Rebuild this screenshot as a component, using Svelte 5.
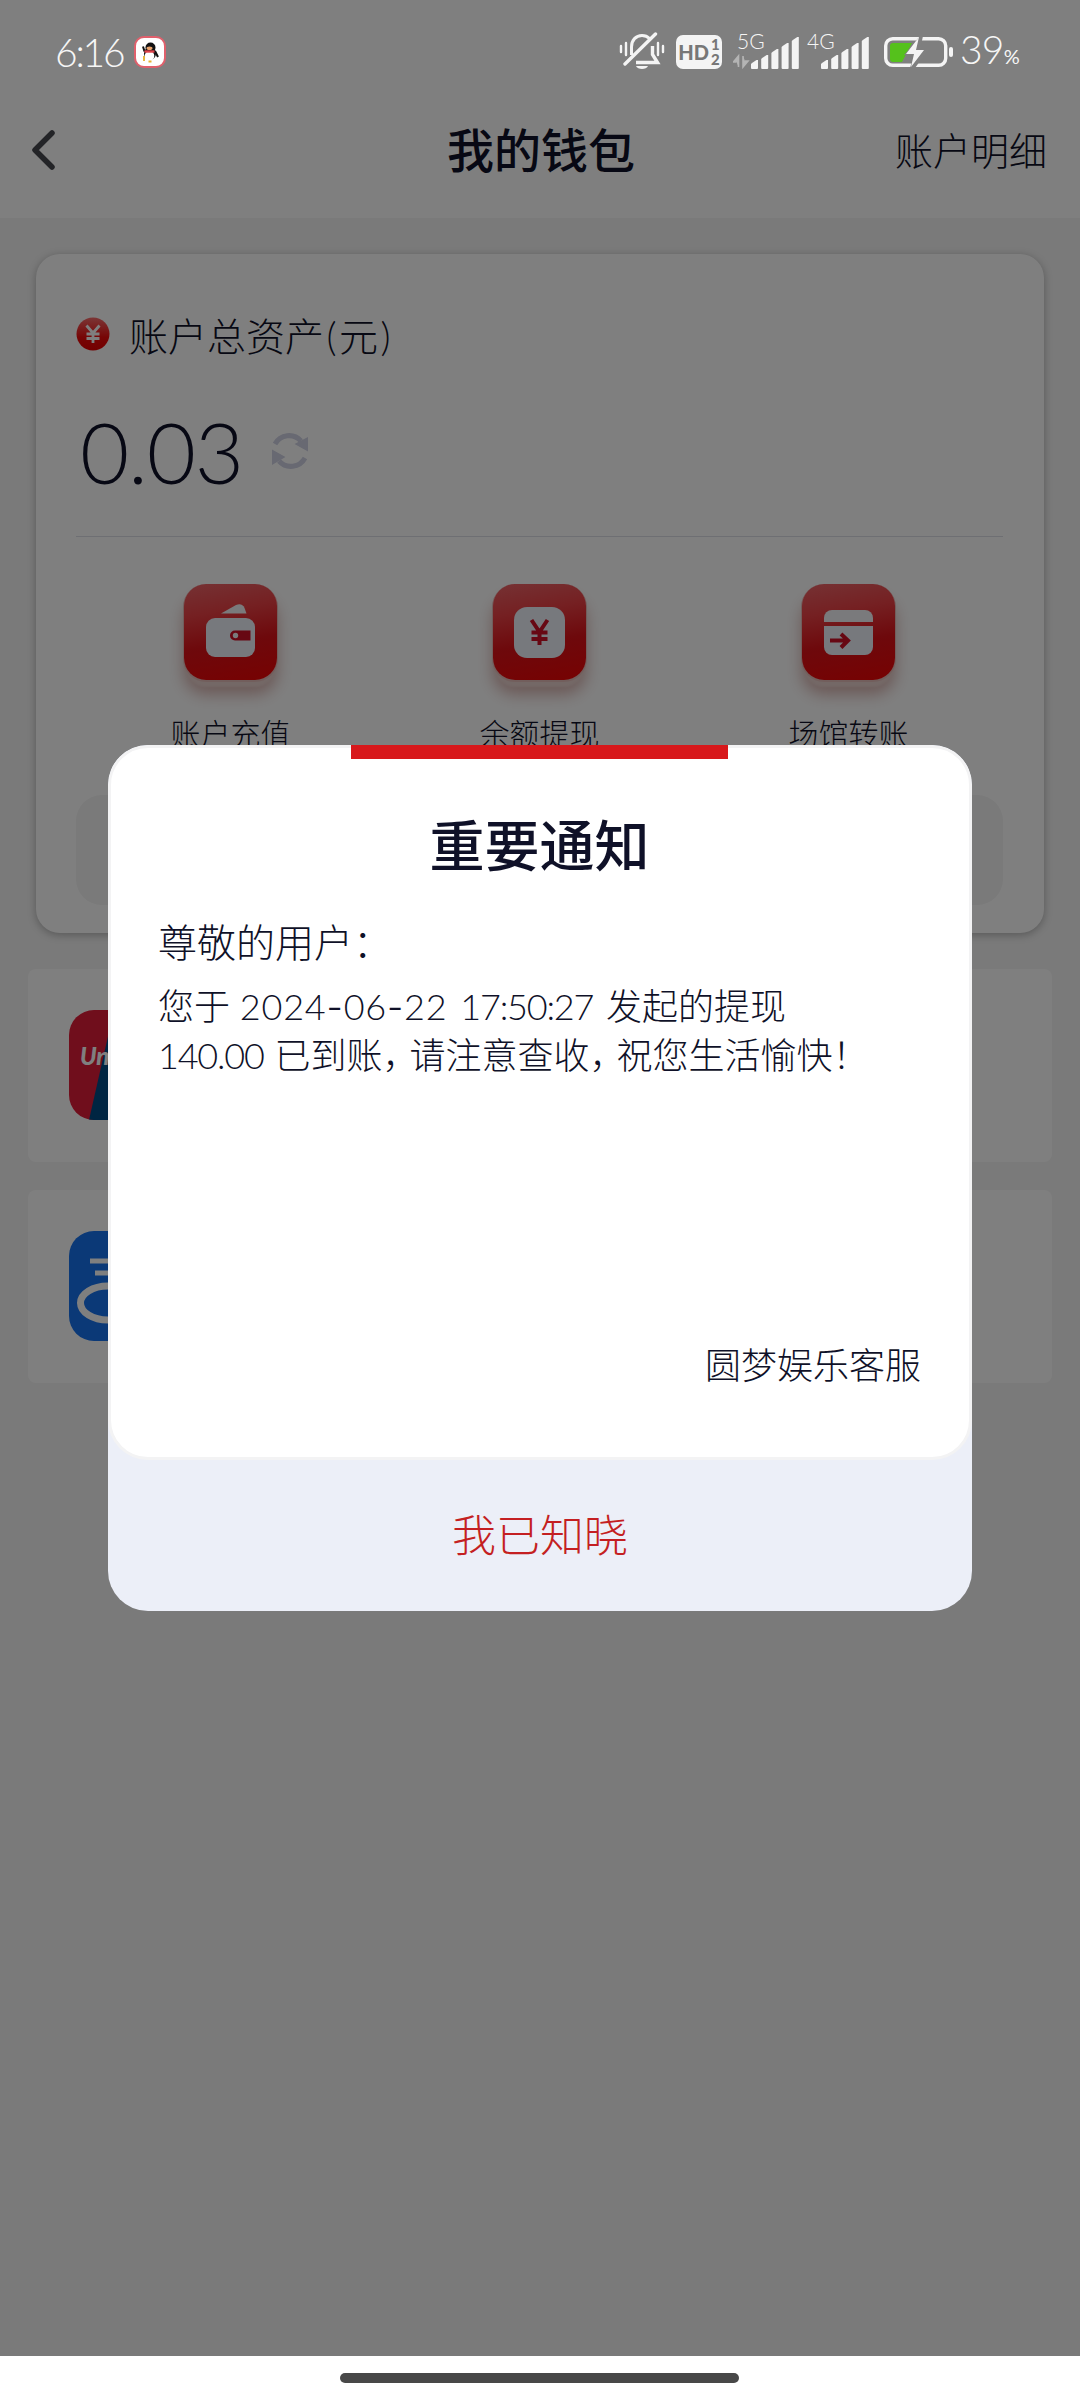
<script lang="ts">
  interface Action {
    id: string;
    label: string;
  }

  const actions: Action[] = [
    { id: 'deposit', label: '账户充值' },
    { id: 'withdraw', label: '余额提现' },
    { id: 'transfer', label: '场馆转账' }
  ];

  const networks = ['5G', '4G'];

  let noticeOpen = $state(true);
</script>

<div class="screen">
  <div class="status-bar">
    <span class="time">6:16</span>
    <svg class="qq" width="32" height="32" viewBox="0 0 32 32">
      <rect x="1" y="1" width="30" height="30" rx="9" fill="#fff" stroke="#e0606c" stroke-width="2" />
      <ellipse cx="16" cy="17.500" rx="6" ry="6.500" fill="#111" />
      <circle cx="16.500" cy="11.500" r="5" fill="#111" />
      <path d="M9 10.500l1.500 5M21 15l3 6" stroke="#111" stroke-width="2" />
      <ellipse cx="15.500" cy="20" rx="4.800" ry="4.800" fill="#fff" />
      <ellipse cx="15.500" cy="12.300" rx="3" ry="1.800" fill="#e9a36b" />
      <path d="M10.500 15.500h10" stroke="#e0434b" stroke-width="2.400" />
      <path d="M10 20v5M14.500 25.500h3" stroke="#e5b12e" stroke-width="1.800" />
    </svg>

    <div class="status-icons">
      <svg class="bell" width="46" height="40" viewBox="0 0 46 40" fill="none" stroke="#f4f4f4">
        <path d="M12.500 23V15C12.500 8 17 3.500 23 3.500c3 0 5.500 1 7.500 3" stroke-width="3" />
        <path d="M33.500 14v8.500l5 8H17" stroke-width="3.400" />
        <path d="M6 32L36.500 2" stroke-width="3.400" stroke-linecap="round" />
        <path d="M17 34h12c-1.500 4-10.500 4-12 0z" fill="#f4f4f4" stroke="none" />
        <path d="M2 14v6M7 11v12M39 11v12M44 14v6" stroke-width="2.400" stroke-linecap="round" />
      </svg>
      <div class="hd">
        <span>HD</span>
        <span class="hd-num"><b>1</b><b>2</b></span>
      </div>
      {#each networks as net, i}
        <div class="signal">
          <span class="net">{net}</span>
          <svg width="68" height="34" viewBox="0 0 68 34">
            {#if i === 0}
              <path d="M5.500 32V21l-5 6h3v0M10 21v11l5-6h-3" fill="#b4b4b4" stroke="#b4b4b4" stroke-width="1.600" />
            {/if}
            {#each [8, 13, 19, 25, 31] as h, n}
              <path
                d="M{19 + n * 10.200} {33 - h + 3}l4.500-3h1.500v{h}a1 1 0 0 1-1 1h-5a1 1 0 0 1-1-1v-{h - 4}z"
                fill="#f4f4f4"
              />
            {/each}
          </svg>
        </div>
      {/each}
      <svg class="battery" width="70" height="32" viewBox="0 0 70 32">
        <rect x="1.700" y="2.700" width="60" height="26.600" rx="7" fill="none" stroke="#f4f4f4" stroke-width="3.400" />
        <path d="M9 7h19L18 26H9a3 3 0 0 1-3-3V10a3 3 0 0 1 3-3z" fill="#55c11c" />
        <path d="M36 0L20 19h10l-4 13h5l13-18h-8l3-14z" fill="#808080" />
        <path d="M35 1L22 18h8l-3 13 13-17h-8z" fill="#f4f4f4" />
        <rect x="65" y="11" width="4" height="10" rx="2" fill="#f4f4f4" />
      </svg>
      <span class="percent">39<small>%</small></span>
    </div>
  </div>

  <header>
    <svg width="24" height="40" viewBox="0 0 24 40" fill="none" stroke="#47484f" stroke-width="5.500" stroke-linecap="round" stroke-linejoin="round">
      <path d="M20 3L3 20l17 17" />
    </svg>
    <h1>我的钱包</h1>
    <span class="detail">账户明细</span>
  </header>

  <main>
    <section class="wallet">
      <div class="asset-title">
        <svg width="34" height="34" viewBox="0 0 34 34">
          <defs>
            <linearGradient id="coin" x1="0" y1="0" x2="0" y2="1">
              <stop offset="0" stop-color="#f76c6c" />
              <stop offset="0.600" stop-color="#ee0b0b" />
              <stop offset="1" stop-color="#e60000" />
            </linearGradient>
          </defs>
          <circle cx="17" cy="17" r="16.500" fill="url(#coin)" />
          <path d="M10.500 8.500L17 16l6.500-7.500M17 16v10M10.500 17h13M10.500 21.500h13" fill="none" stroke="#fff" stroke-width="2.800" />
        </svg>
        <span>账户总资产<i>(</i>元<i>)</i></span>
      </div>
      <div class="balance">
        <span>0.03</span>
        <svg width="38" height="38" viewBox="0 0 38 38">
          <path d="M4 12A16 16 0 0 1 30 9" fill="none" stroke="#d0d2e4" stroke-width="5" />
          <path d="M37 5v14.500L23.500 12z" fill="#d0d2e4" />
          <path d="M34 26A16 16 0 0 1 8 29" fill="none" stroke="#d0d2e4" stroke-width="5" />
          <path d="M1 33V17.500L14.500 25z" fill="#d0d2e4" />
        </svg>
      </div>
      <div class="actions">
        {#each actions as action}
          <div class="action">
            <div class="tile">
              <svg width="93" height="96" viewBox="0 0 93 96">
                {#if action.id === 'deposit'}
                  <path d="M37 29.500l15-8.500c4-1.500 7-.5 8.500 3l2 5.500z" fill="#f5f5f8" />
                  <rect x="22" y="34" width="49" height="39" rx="9" fill="#eef2fb" />
                  <path d="M66.500 46.500H51a5 5 0 0 0 0 10h15.500z" fill="#cf1026" />
                  <circle cx="51.500" cy="51.500" r="2.700" fill="#f5f5f8" />
                {:else if action.id === 'withdraw'}
                  <rect x="21" y="23" width="51" height="51" rx="13" fill="#eef2fb" />
                  <path d="M38.500 36L46.500 48l8-12M46.500 48v13M38.500 48.500h16M38.500 55h16" fill="none" stroke="#cf1026" stroke-width="4" />
                {:else}
                  <path d="M22 38v-4a8 8 0 0 1 8-8h33a8 8 0 0 1 8 8v4z" fill="#f5f5f8" />
                  <path d="M22 42h49v21a8 8 0 0 1-8 8H30a8 8 0 0 1-8-8z" fill="#eef2fb" />
                  <path d="M28 56.500h17M39 50l7 6.500-7 7" fill="none" stroke="#cf1026" stroke-width="4" />
                {/if}
              </svg>
            </div>
            <span>{action.label}</span>
          </div>
        {/each}
      </div>
      <div class="tip"></div>
    </section>

    <section class="row">
      <svg width="110" height="110" viewBox="0 0 110 110">
        <clipPath id="bank"><rect width="110" height="110" rx="25" /></clipPath>
        <g clip-path="url(#bank)">
          <rect width="110" height="110" fill="#e11c38" />
          <path d="M45 0H110V110H20z" fill="#004a84" />
          <text x="11" y="55" class="union">UnionPay</text>
        </g>
      </svg>
    </section>
    <section class="row">
      <svg width="110" height="110" viewBox="0 0 110 110">
        <rect width="110" height="110" rx="25" fill="#1672ee" />
        <path d="M21 30h68M26 42h58" stroke="#fff" stroke-width="5" />
        <ellipse cx="39" cy="72" rx="27.500" ry="17" fill="none" stroke="#fff" stroke-width="7" />
      </svg>
    </section>
  </main>

  <div class="nav-bar"><i></i></div>

  {#if noticeOpen}
    <div class="mask">
      <div class="dialog">
        <div class="panel">
          <div class="accent"></div>
          <h2>重要通知</h2>
          <p class="greeting">尊敬的用户<span class="punct">：</span></p>
          <p class="message">
            您于 <span class="date">2024<i>-</i>06<i>-</i>22</span> <span class="clock">17:50:27</span> 发起的提现<br />
            <span class="amount">140.00</span> 已到账<span class="punct">，</span>请注意查收<span class="punct">，</span>祝您生活愉快<span class="punct">！</span>
          </p>
          <p class="sign">圆梦娱乐客服</p>
        </div>
        <button onclick={() => (noticeOpen = false)}>我已知晓</button>
      </div>
    </div>
  {/if}
</div>

<style>
  :global(body) {
    margin: 0;
  }

  .screen {
    position: relative;
    display: flex;
    flex-direction: column;
    width: 1080px;
    height: 2400px;
    overflow: hidden;
    background: #f4f4f4;
    color: #0f1128;
    font-family: Lato, 'Noto Sans CJK SC', sans-serif;
    font-weight: 300;
  }

  h1,
  h2,
  p {
    margin: 0;
  }

  svg {
    display: block;
    flex: none;
  }

  .status-bar {
    position: relative;
    z-index: 20;
    display: flex;
    align-items: center;
    height: 104px;
    padding: 0 61px 0 55px;
    box-sizing: border-box;
    color: #f6f6f6;
  }

  .time {
    width: 79px;
    font-size: 39px;
    line-height: 40px;
    letter-spacing: -2.2px;
  }

  .status-icons {
    display: flex;
    align-items: center;
    height: 40px;
    margin-left: auto;
  }

  .hd {
    display: flex;
    align-items: center;
    justify-content: center;
    gap: 2px;
    width: 46px;
    height: 34px;
    margin-left: 11px;
    border-radius: 7px;
    background: #f4f4f4;
    color: #777;
    font: 900 20px/34px Lato, sans-serif;
  }

  .hd-num {
    display: flex;
    flex-direction: column;
    font-size: 15px;
    line-height: 15px;
  }

  .signal {
    position: relative;
    display: flex;
    align-items: flex-end;
    width: 70px;
    height: 34px;
    margin-left: 11px;
  }

  .signal + .signal {
    margin-left: 0;
  }

  .net {
    position: absolute;
    left: 4px;
    top: -5px;
    font-size: 21px;
    line-height: 22px;
  }

  .battery {
    margin-left: 11px;
  }

  .percent {
    width: 59px;
    margin-left: 6px;
    font-size: 39px;
    line-height: 40px;
    letter-spacing: -0.8px;
    white-space: nowrap;
  }

  .percent small {
    font-size: 20px;
    font-weight: 400;
  }

  header {
    display: flex;
    align-items: center;
    height: 114px;
    margin-top: -104px;
    padding: 104px 33px 0 32px;
    background: #fff;
  }

  header svg {
    margin-top: -22px;
  }

  h1 {
    flex: 1;
    margin-top: -23px;
    padding-left: 131px;
    font-size: 47px;
    font-weight: 500;
    line-height: 60px;
    text-align: center;
  }

  .detail {
    margin-top: -22px;
    font-size: 38px;
    line-height: 50px;
  }

  main {
    flex: 1;
    padding: 36px 28px 0;
  }

  .wallet {
    display: flex;
    flex-direction: column;
    height: 679px;
    margin: 0 8px 36px;
    padding: 0 41px 0 40px;
    box-sizing: border-box;
    border-radius: 24px;
    background: #fff;
    box-shadow: 0 2px 8px rgba(0, 0, 0, 0.28);
  }

  .asset-title {
    display: flex;
    align-items: center;
    gap: 19px;
    height: 60px;
    padding-top: 50px;
    font-size: 39px;
    white-space: nowrap;
  }

  .asset-title i {
    padding: 0 2.5px;
    font-style: normal;
  }

  .balance {
    display: flex;
    align-items: center;
    gap: 28px;
    height: 173px;
    padding: 2px 0 0 4px;
    box-sizing: border-box;
    border-bottom: 1px solid #dcdee6;
    font-size: 85px;
    letter-spacing: -1.2px;
  }

  .actions {
    display: flex;
    margin-top: 47px;
  }

  .action {
    display: flex;
    flex: 1;
    flex-direction: column;
    align-items: center;
    gap: 33px;
    font-size: 30px;
    line-height: 40px;
  }

  .tile {
    width: 93px;
    height: 96px;
    border-radius: 22px;
    background: linear-gradient(170deg, #ec6468 0%, #ea4044 30%, #dc1218 60%, #ee0404 100%);
    box-shadow:
      0 1px 0 1px #e4bdb9,
      0 8px 2px -1px #e8d0cc,
      0 14px 16px rgba(150, 50, 40, 0.4);
  }

  .tip {
    height: 110px;
    margin-top: auto;
    margin-bottom: 28px;
    border-radius: 26px;
    background: #f4f4f4;
  }

  .row {
    display: flex;
    align-items: center;
    height: 193px;
    margin-bottom: 28px;
    padding-left: 41px;
    border-radius: 8px;
    background: #fff;
  }

  .row svg {
    margin-top: -1px;
  }

  .union {
    fill: #fff;
    font: italic 900 24px Lato, sans-serif;
  }

  .nav-bar {
    display: flex;
    align-items: center;
    justify-content: center;
    height: 44px;
    background: #fff;
  }

  .nav-bar i {
    width: 399px;
    height: 10px;
    margin-right: 2px;
    border-radius: 5px;
    background: #484848;
  }

  .mask {
    position: absolute;
    inset: 0 0 44px;
    z-index: 10;
    display: flex;
    align-items: center;
    justify-content: center;
    background: rgba(0, 0, 0, 0.5);
  }

  .dialog {
    width: 864px;
    height: 866px;
    border-radius: 40px;
    overflow: hidden;
    background: #eceff8;
  }

  .panel {
    display: flex;
    flex-direction: column;
    height: 715px;
    padding: 0 48px 0 47px;
    box-sizing: border-box;
    border: 3px solid #f3f3f4;
    border-radius: 40px;
    background: #fff;
  }

  .accent {
    width: 377px;
    height: 14px;
    margin: -3px auto 0;
    background: #d8181b;
  }

  h2 {
    margin-top: 50px;
    font-size: 55px;
    font-weight: 500;
    line-height: 72px;
    text-align: center;
  }

  .greeting {
    margin-top: 36px;
    font-size: 39px;
    line-height: 50px;
  }

  .message {
    margin-top: 15px;
    font-size: 36px;
    line-height: 48px;
    white-space: nowrap;
  }

  .date {
    letter-spacing: 0.8px;
  }

  .date i {
    font-family: Inter, sans-serif;
    font-style: normal;
  }

  .clock {
    margin-left: 3px;
    letter-spacing: -1.2px;
  }

  .clock,
  .amount {
    margin-right: 3px;
  }

  .amount {
    margin-right: 1px;
    letter-spacing: -1.2px;
  }

  .punct {
    letter-spacing: -9px;
  }

  .sign {
    margin-top: auto;
    margin-bottom: 67px;
    font-size: 36px;
    line-height: 50px;
    text-align: right;
  }

  button {
    display: block;
    width: 100%;
    height: 151px;
    padding: 0 0 5px;
    border: none;
    background: none;
    color: #c41f22;
    font: inherit;
    font-size: 44px;
  }
</style>
